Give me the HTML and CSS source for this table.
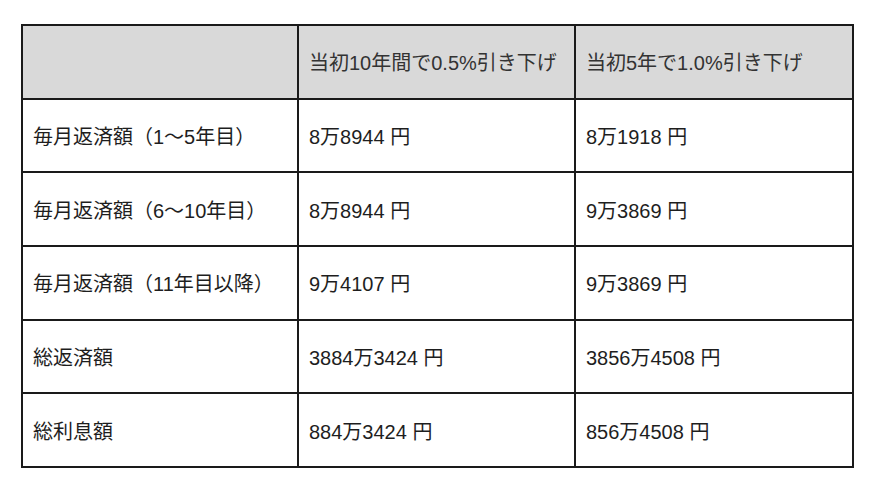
FILE: index.html
```html
<!DOCTYPE html>
<html lang="ja">
<head>
<meta charset="utf-8">
<link rel="stylesheet" href="styles.css">
</head>
<body>
<div class="wrap">
<table class="loan">
  <colgroup><col class="c1"><col class="c2"><col class="c3"></colgroup>
  <thead>
    <tr><th></th><th>当初10年間で0.5%引き下げ</th><th>当初5年で1.0%引き下げ</th></tr>
  </thead>
  <tbody>
    <tr><td>毎月返済額（1〜5年目）</td><td>8万8944 円</td><td>8万1918 円</td></tr>
    <tr><td>毎月返済額（6〜10年目）</td><td>8万8944 円</td><td>9万3869 円</td></tr>
    <tr><td>毎月返済額（11年目以降）</td><td>9万4107 円</td><td>9万3869 円</td></tr>
    <tr><td>総返済額</td><td>3884万3424 円</td><td>3856万4508 円</td></tr>
    <tr><td>総利息額</td><td>884万3424 円</td><td>856万4508 円</td></tr>
  </tbody>
</table>
</div>
</body>
</html>
```
FILE: styles.css
```css
html, body { margin: 0; padding: 0; background: #fff; }
.wrap { padding: 24px 0 0 21px; }
.loan {
  border-collapse: collapse;
  table-layout: fixed;
  width: 831px;
  font-family: "Liberation Sans", "Noto Sans CJK JP", sans-serif;
  font-size: 20px;
  color: #1e1e1e;
}
.c1 { width: 276px; }
.c2 { width: 277px; }
.c3 { width: 278px; }
.loan th, .loan td {
  border: 2px solid #1a1a1a;
  height: 71.7px;
  padding: 0 0 0 10px;
  text-align: left;
  font-weight: normal;
  vertical-align: middle;
  white-space: nowrap;
}
.loan th { background: #d9d9d9; color: #333; }
```
